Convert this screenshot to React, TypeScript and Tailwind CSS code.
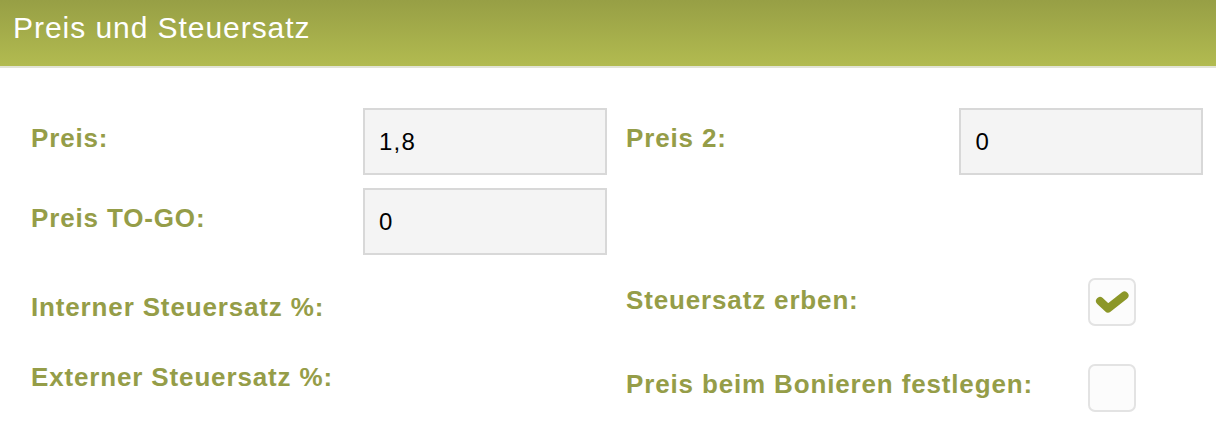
import React from "react";

const labelCls =
  "font-bold text-[26px] leading-[30px] tracking-[0.85px] text-[#959d48] whitespace-nowrap";

function Field({ value }: { value: string }) {
  return (
    <div className="w-[244px] h-[67px] border-2 border-[#d8d8d8] bg-[#f4f4f4] flex items-center pl-[14px] text-[24px] tracking-[1.2px] text-black">
      {value}
    </div>
  );
}

function Check({ checked }: { checked: boolean }) {
  return (
    <div className="w-[48px] h-[48px] rounded-[7px] border-2 border-[#e3e3e3] bg-[#fcfcfc] flex items-center justify-center">
      {checked && (
        <svg width="36" height="28" viewBox="0 0 36 28">
          <path
            d="M6 13 L14 20.5 L30.5 7.5"
            fill="none"
            stroke="#8c9728"
            strokeWidth="8"
            strokeLinecap="round"
            strokeLinejoin="round"
          />
        </svg>
      )}
    </div>
  );
}

export default function App() {
  return (
    <div
      className="w-[1216px] h-[424px] bg-white overflow-hidden"
      style={{ fontFamily: '"Liberation Sans", Arial, sans-serif' }}
    >
      <div className="h-[68px] border-b-2 border-[#e2e4d6] bg-gradient-to-b from-[#979f45] to-[#b2bb50] pl-[13px] pt-[13px]">
        <span className="block text-white text-[30px] tracking-[0.95px] leading-[30px]">
          Preis und Steuersatz
        </span>
      </div>
      <div className="grid grid-cols-[576px_577px] gap-x-[19px] pl-[31px] pt-[40px]">
        <div className="flex flex-col">
          <div className="flex h-[67px]">
            <div className={`${labelCls} w-[332px] mt-[15px]`}>Preis:</div>
            <Field value="1,8" />
          </div>
          <div className="flex h-[67px] mt-[13px]">
            <div className={`${labelCls} w-[332px] mt-[15px]`}>Preis TO-GO:</div>
            <Field value="0" />
          </div>
          <div className={`${labelCls} mt-[37px]`}>Interner Steuersatz %:</div>
          <div className={`${labelCls} mt-[40px]`}>Externer Steuersatz %:</div>
        </div>
        <div className="flex flex-col">
          <div className="flex h-[67px]">
            <div className={`${labelCls} w-[334px] mt-[15px]`}>Preis 2:</div>
            <Field value="0" />
          </div>
          <div className="flex mt-[103px]">
            <div className={`${labelCls} w-[462px] mt-[7px]`}>Steuersatz erben:</div>
            <Check checked />
          </div>
          <div className="flex mt-[38px]">
            <div className={`${labelCls} w-[462px] mt-[5px]`}>
              Preis beim Bonieren festlegen:
            </div>
            <Check checked={false} />
          </div>
        </div>
      </div>
    </div>
  );
}
